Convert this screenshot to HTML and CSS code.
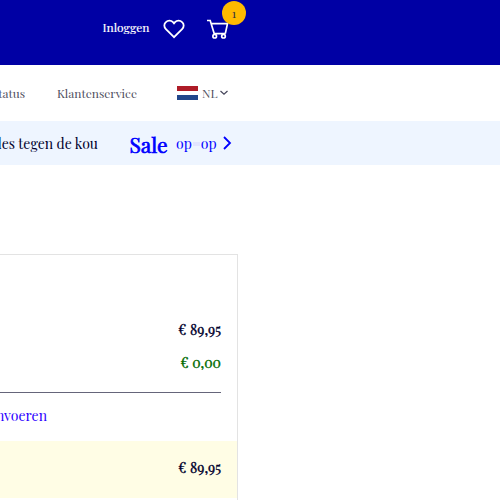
FILE: index.html
```
<!DOCTYPE html>
<html lang="nl">
<head>
<meta charset="utf-8">
<title>Winkelmand</title>
<link rel="stylesheet" href="styles.css">
</head>
<body>
<header class="header">
  <a class="login">Inloggen</a>
  <svg class="heart" width="22" height="20" viewBox="0 0 22 20"><path d="M11 18.2 2.9 10.1C.8 8 .8 5 2.9 3.1c2-2 5.2-1.9 7.1.1l1 1.2 1-1.2c1.9-2 5.1-2.1 7.1-.1 2.1 1.9 2.1 4.9 0 7Z"/></svg>
  <div class="cart">
    <svg width="22" height="20" viewBox="0 0 22 20"><path d="M0 1.5h3.2l4 13.1h11.2M4.2 4.7h16.3l-2.2 9.9"/><circle cx="7.7" cy="17.2" r="1.8"/><circle cx="16.5" cy="17.2" r="1.8"/></svg>
    <span class="badge">1</span>
  </div>
</header>
<nav class="nav">
  <a class="status">tatus</a>
  <a class="service">Klantenservice</a>
  <span class="flag"></span>
  <span class="lang">NL</span>
  <svg class="down" width="8" height="6" viewBox="0 0 8 6"><path d="m.5 1 3.5 3.3L7.5 1"/></svg>
</nav>
<div class="promo">
  <a class="cold">les tegen de kou</a>
  <a class="sale">Sale</a>
  <a class="op">op<span class="dash"></span>op</a>
  <svg class="next" width="9" height="14" viewBox="0 0 9 14"><path d="m1 1 6 6-6 6"/></svg>
</div>
<main class="card">
  <div class="row price">€ 89,95</div>
  <div class="row price discount">€ 0,00</div>
  <div class="rule"></div>
  <a class="code">nvoeren</a>
  <div class="total price">€ 89,95</div>
</main>
</body>
</html>
```
FILE: styles.css
```
* { box-sizing: border-box; }
body {
  margin: 0;
  width: 500px;
  height: 500px;
  overflow: hidden;
  background: #fff;
  color: #00002d;
  font-family: "Playfair Display", "Liberation Serif", serif;
  white-space: nowrap;
}
svg { display: block; flex: none; fill: none; }
a, span { flex: none; }
.header {
  height: 65px;
  padding: 19px 0 0 102px;
  display: flex;
  background: #0000a4;
  color: #fff;
}
.login { width: 61px; padding-left: .5px; font-size: 12px; line-height: 17px; -webkit-text-stroke: .15px #fff; }
.heart { margin-right: 22px; stroke: #fff; stroke-width: 1.8; }
.cart { position: relative; }
.cart svg { stroke: #fff; stroke-width: 1.7; }
.badge {
  position: absolute;
  left: 15px;
  top: -18px;
  width: 24px;
  height: 24px;
  border-radius: 50%;
  background: #ffb900;
  color: #34343f;
  font-size: 12px;
  line-height: 25px;
  text-align: center;
}
.nav {
  height: 56px;
  display: flex;
  align-items: center;
  font-size: 12px;
  color: #50505f;
}
.status { width: 25px; margin-right: 32px; display: flex; justify-content: flex-end; }
.service { width: 120px; }
.flag { width: 21px; height: 14px; margin-right: 4px; background: linear-gradient(#ae1c28 0 5px, #fff 5px 9px, #21468b 9px); }
.lang { width: 18px; }
.down { stroke: #45455a; stroke-width: 1.2; }
.promo {
  height: 44px;
  display: flex;
  align-items: center;
  background: #eef5ff;
  color: #0000ff;
}
.cold { width: 98px; margin-right: 31px; padding-top: 1px; display: flex; justify-content: flex-end; font-size: 14px; color: #00002d; }
.sale { width: 47px; padding: 2px 0 0 .5px; font-size: 21px; -webkit-text-stroke: .7px #0000ff; }
.op { width: 47px; padding-top: 1px; font-size: 14px; }
.dash { display: inline-block; width: 7px; height: 4px; margin: 0 1px 3px; background: #e2e5ff; }
.next { stroke: #0000ff; stroke-width: 1.8; }
.card {
  width: 238px;
  height: 246px;
  margin-top: 89px;
  padding-top: 58px;
  border: solid #e3e3e3;
  border-width: 1px 1px 0 0;
}
.price { text-align: right; font-size: 14px; -webkit-text-stroke: .35px currentColor; line-height: 33px; padding-right: 16px; }
.row { height: 33px; }
.discount { color: #006a00; }
.rule { height: 1px; margin: 13px 16px 0 0; background: #65657a; }
.code { display: flex; justify-content: flex-end; width: 47px; height: 48px; padding-top: 13px; font-size: 14px; line-height: 19px; color: #2b00ff; }
.total { height: 57px; background: #fffde5; line-height: 53px; }
```
